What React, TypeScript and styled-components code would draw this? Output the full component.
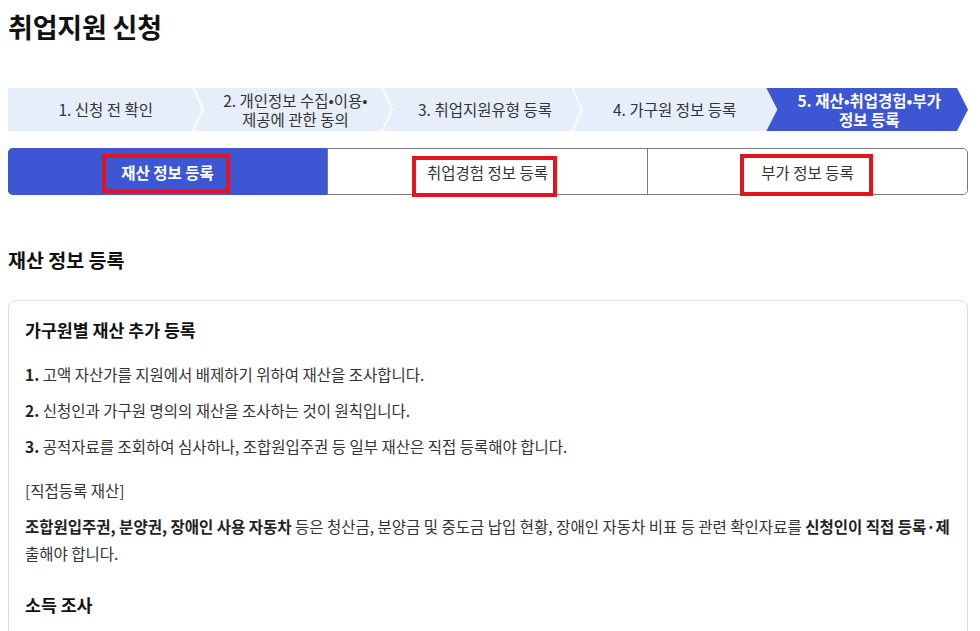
import React from "react";
import styled, { createGlobalStyle, css } from "styled-components";

const GlobalStyle = createGlobalStyle`
  html, body {
    margin: 0;
    padding: 0;
    background: #ffffff;
  }
  body {
    font-family: "Noto Sans CJK KR", "Noto Sans", sans-serif;
    color: #222222;
  }
  * { box-sizing: border-box; }
`;

const Page = styled.main`
  padding: 10px 12px 0 8px;
  width: 980px;
`;

const Title = styled.h1`
  margin: 0;
  font-size: 27px;
  line-height: 34px;
  font-weight: 700;
  color: #111111;
  letter-spacing: -0.2px;
`;

const StepBar = styled.ol`
  list-style: none;
  margin: 44px 0 0;
  padding: 0;
  display: flex;
  height: 43px;
  background: linear-gradient(to right, #e6eefa calc(100% - 12px), transparent calc(100% - 12px));
`;

const Step = styled.li<{ $active?: boolean }>`
  position: relative;
  flex: 1 1 0;
  display: flex;
  align-items: center;
  justify-content: center;
  text-align: center;
  font-size: 15.5px;
  line-height: 19px;
  color: #333333;
  padding: 0 8px 0 14px;
  white-space: nowrap;
  ${(p) =>
    p.$active &&
    css`
      flex-grow: 1.06;
      background: #3d56d4;
      color: #ffffff;
      font-weight: 700;
      padding: 0 10px 0 14px;
      clip-path: polygon(0 0, calc(100% - 11px) 0, 100% 50%, calc(100% - 11px) 100%, 0 100%, 11px 50%);
    `}
`;

const Chevron = styled.svg`
  position: absolute;
  top: 0;
  right: -7px;
  width: 14px;
  height: 43px;
  z-index: 1;
`;

const Tabs = styled.div`
  margin-top: 17px;
  display: flex;
  height: 47px;
  border: 1px solid #7a7a7a;
  border-radius: 5px;
`;

const Tab = styled.button<{ $active?: boolean; $last?: boolean }>`
  position: relative;
  flex: 1 1 0;
  border: none;
  border-right: ${(p) => (p.$last ? "none" : "1px solid #7a7a7a")};
  background: ${(p) => (p.$active ? "#3d56d4" : "#ffffff")};
  color: ${(p) => (p.$active ? "#ffffff" : "#333333")};
  font-family: inherit;
  font-size: 15.5px;
  font-weight: ${(p) => (p.$active ? 700 : 400)};
  padding: 0;
  margin: ${(p) => (p.$active ? "-1px 0 -1px -1px" : "0")};
  border-radius: ${(p) => (p.$active ? "5px 0 0 5px" : p.$last ? "0 5px 5px 0" : "0")};
  cursor: pointer;
`;

const Highlight = styled.span<{ $left: number; $top: number; $w: number; $h: number }>`
  position: absolute;
  left: ${(p) => p.$left}px;
  top: ${(p) => p.$top}px;
  width: ${(p) => p.$w}px;
  height: ${(p) => p.$h}px;
  border: 4px solid #e3141c;
  pointer-events: none;
`;

const SectionHeading = styled.h2`
  margin: 51px 0 0;
  font-size: 19.5px;
  line-height: 28px;
  font-weight: 700;
  color: #111111;
`;

const Card = styled.section`
  margin-top: 26px;
  border: 1px solid #dddddd;
  border-radius: 8px;
  padding: 16px 12px 40px 16px;
`;

const CardTitle = styled.h3<{ $gap?: number }>`
  margin: ${(p) => p.$gap ?? 0}px 0 0;
  font-size: 17.3px;
  line-height: 26px;
  font-weight: 700;
  color: #111111;
`;

const List = styled.ol`
  list-style: none;
  margin: 19px 0 0;
  padding: 0;
  display: flex;
  flex-direction: column;
  gap: 12px;
`;

const Item = styled.li`
  font-size: 15.5px;
  line-height: 24px;
  color: #333333;
`;

const Num = styled.b`
  font-weight: 700;
  color: #222222;
`;

const Note = styled.p`
  margin: 20px 0 0;
  font-size: 15.5px;
  line-height: 24px;
  color: #333333;
`;

const Para = styled.p`
  margin: 11px 0 0;
  font-size: 15.5px;
  line-height: 27px;
  color: #333333;
  b { font-weight: 700; color: #222222; }
`;

const steps: { label: React.ReactNode; active?: boolean }[] = [
  { label: "1. 신청 전 확인" },
  { label: <>2. 개인정보 수집•이용•<br />제공에 관한 동의</> },
  { label: "3. 취업지원유형 등록" },
  { label: "4. 가구원 정보 등록" },
  { label: <>5. 재산•취업경험•부가<br />정보 등록</>, active: true },
];

const tabs = [
  { label: "재산 정보 등록", active: true, hl: { left: 94, top: 6, w: 128, h: 39 } },
  { label: "취업경험 정보 등록", hl: { left: 84, top: 7, w: 145, h: 41 } },
  { label: "부가 정보 등록", last: true, hl: { left: 92, top: 5, w: 133, h: 42 } },
];

export default function App() {
  return (
    <>
      <GlobalStyle />
      <Page>
        <Title>취업지원 신청</Title>
        <StepBar>
          {steps.map((s, i) => (
            <Step key={i} $active={s.active}>
              <span>{s.label}</span>
              {i < 3 && (
                <Chevron viewBox="0 0 14 43" aria-hidden>
                  <polyline points="2,-1 12,21.5 2,44" fill="none" stroke="#fbfcff" strokeWidth="2" />
                </Chevron>
              )}
            </Step>
          ))}
        </StepBar>
        <Tabs>
          {tabs.map((t, i) => (
            <Tab key={i} $active={t.active} $last={t.last}>
              {t.label}
              <Highlight $left={t.hl.left} $top={t.hl.top} $w={t.hl.w} $h={t.hl.h} />
            </Tab>
          ))}
        </Tabs>
        <SectionHeading>재산 정보 등록</SectionHeading>
        <Card>
          <CardTitle>가구원별 재산 추가 등록</CardTitle>
          <List>
            <Item><Num>1.</Num> 고액 자산가를 지원에서 배제하기 위하여 재산을 조사합니다.</Item>
            <Item><Num>2.</Num> 신청인과 가구원 명의의 재산을 조사하는 것이 원칙입니다.</Item>
            <Item><Num>3.</Num> 공적자료를 조회하여 심사하나, 조합원입주권 등 일부 재산은 직접 등록해야 합니다.</Item>
          </List>
          <Note>[직접등록 재산]</Note>
          <Para>
            <b>조합원입주권, 분양권, 장애인 사용 자동차</b> 등은 청산금, 분양금 및 중도금 납입 현황, 장애인 자동차 비표 등 관련 확인자료를 <b>신청인이 직접 등록·제</b>출해야 합니다.
          </Para>
          <CardTitle $gap={25}>소득 조사</CardTitle>
        </Card>
      </Page>
    </>
  );
}
